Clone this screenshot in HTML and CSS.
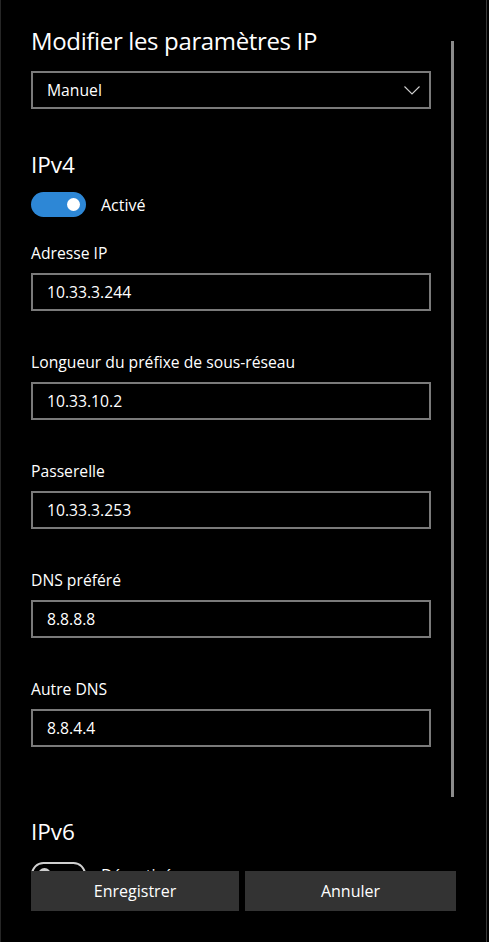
FILE: index.html
```html
<!DOCTYPE html>
<html lang="fr">
<head>
<meta charset="utf-8">
<link rel="stylesheet" href="styles.css">
</head>
<body>
<div class="window">
  <div class="scrollbar"></div>
  <div class="content">
    <h1 class="title">Modifier les paramètres IP</h1>
    <div class="select">
      <span>Manuel</span>
      <svg class="chev" width="16" height="9" viewBox="0 0 16 9"><path d="M0.5 0.5 L8 8 L15.5 0.5" fill="none" stroke="#d0d0d0" stroke-width="1.1"/></svg>
    </div>

    <h2 class="section">IPv4</h2>
    <div class="toggle-row">
      <div class="toggle on"><span class="knob"></span></div>
      <span class="toggle-label">Activé</span>
    </div>

    <div class="field">
      <label>Adresse IP</label>
      <div class="input">10.33.3.244</div>
    </div>
    <div class="field">
      <label>Longueur du préfixe de sous-réseau</label>
      <div class="input">10.33.10.2</div>
    </div>
    <div class="field">
      <label>Passerelle</label>
      <div class="input">10.33.3.253</div>
    </div>
    <div class="field">
      <label>DNS préféré</label>
      <div class="input">8.8.8.8</div>
    </div>
    <div class="field">
      <label>Autre DNS</label>
      <div class="input">8.8.4.4</div>
    </div>

    <h2 class="section v6">IPv6</h2>
    <div class="toggle-row v6">
      <div class="toggle off"><span class="knob"></span></div>
      <span class="toggle-label">Désactivé</span>
    </div>
  </div>
  <div class="footer">
    <button class="btn">Enregistrer</button>
    <button class="btn">Annuler</button>
  </div>
</div>
</body>
</html>
```
FILE: styles.css
```css
html, body {
  margin: 0;
  padding: 0;
  background: #000;
}
body {
  width: 489px;
  height: 942px;
  overflow: hidden;
  font-family: "Open Sans", "Noto Sans", sans-serif;
  color: #fff;
}
.window {
  position: relative;
  width: 489px;
  height: 942px;
  box-sizing: border-box;
  border-left: 1px solid #262626;
  overflow: hidden;
  background: #000;
}
.window::after {
  content: "";
  position: absolute;
  top: 0;
  bottom: 0;
  right: 2px;
  width: 1px;
  background: #3a3a3a;
}
.scrollbar {
  position: absolute;
  left: 450px;
  top: 41px;
  width: 3px;
  height: 756px;
  background: #8c8c8c;
}
.content {
  padding: 0 0 0 30px;
  width: 400px;
}
.title {
  margin: 0;
  padding-top: 26px;
  font-size: 24px;
  font-weight: 400;
  line-height: 30px;
  height: 30px;
  letter-spacing: -0.35px;
  white-space: nowrap;
}
.select {
  margin-top: 15px;
  height: 38px;
  box-sizing: border-box;
  border: 2px solid #7a7a7a;
  display: flex;
  align-items: center;
  justify-content: space-between;
  padding: 0 9px 0 14px;
  font-size: 15.7px;
}
.chev { display: block; margin-top: 1px; }
.section {
  margin: 0;
  font-size: 22.5px;
  font-weight: 400;
  line-height: 28px;
  margin-top: 42px;
}
.section.v6 { margin-top: 71px; }
.toggle-row {
  display: flex;
  align-items: center;
  margin-top: 13px;
  height: 25px;
}
.toggle-row.v6 { margin-top: 16px; }
.toggle {
  width: 55px;
  height: 25px;
  box-sizing: border-box;
  border-radius: 13px;
  position: relative;
  flex: none;
}
.toggle.on { background: #2d87d6; }
.toggle.off { border: 2px solid #cfcfcf; }
.knob {
  position: absolute;
  width: 13px;
  height: 13px;
  border-radius: 50%;
  top: 6px;
}
.toggle.on .knob { background: #fff; right: 6px; }
.toggle.off .knob { background: #cfcfcf; left: 5px; top: 4px; }
.toggle-label {
  margin-left: 15px;
  font-size: 16px;
}
.field { margin-top: 26px; }
.field + .field { margin-top: 41px; }
.field label {
  display: block;
  font-size: 15.7px;
  line-height: 20px;
  white-space: nowrap;
}
.input {
  margin-top: 10px;
  height: 38px;
  box-sizing: border-box;
  border: 2px solid #7a7a7a;
  display: flex;
  align-items: center;
  padding-left: 14px;
  font-size: 15.7px;
}
.footer {
  position: absolute;
  left: 0;
  right: 0;
  top: 871px;
  height: 71px;
  background: #000;
  display: flex;
  gap: 6px;
  padding-left: 30px;
}
.btn {
  height: 40px;
  border: none;
  background: #333;
  color: #fff;
  font-family: inherit;
  font-size: 16px;
  padding: 0;
}
.btn:first-child { width: 208px; }
.btn:last-child { width: 211px; }
```
